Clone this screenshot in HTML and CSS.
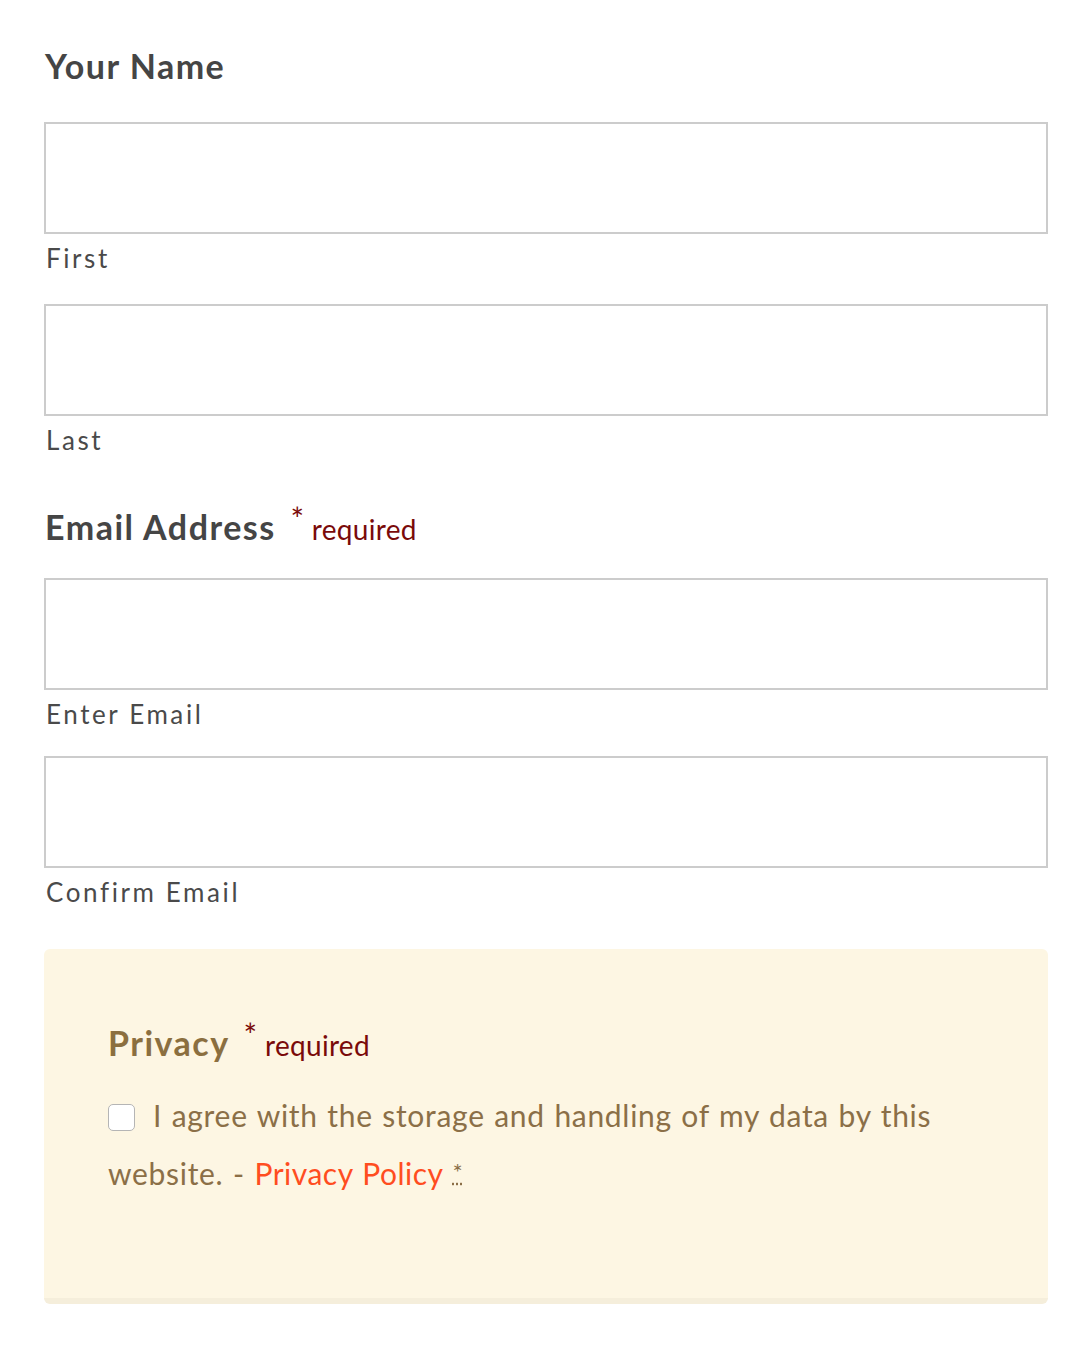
FILE: index.html
```html
<!DOCTYPE html>
<html lang="en">
<head>
<meta charset="utf-8">
<title>Form</title>
<link rel="stylesheet" href="styles.css">
</head>
<body>
<form class="form">
  <div class="group">
    <div class="heading">Your Name</div>
    <div class="field">
      <div class="input"></div>
      <div class="sublabel">First</div>
    </div>
    <div class="field">
      <div class="input"></div>
      <div class="sublabel">Last</div>
    </div>
  </div>
  <div class="group group-email">
    <div class="heading">Email Address <span class="req"><span class="star">*</span> required</span></div>
    <div class="field">
      <div class="input"></div>
      <div class="sublabel">Enter Email</div>
    </div>
    <div class="field field-last">
      <div class="input"></div>
      <div class="sublabel">Confirm Email</div>
    </div>
  </div>
  <div class="privacy">
    <div class="heading privacy-heading">Privacy <span class="req"><span class="star">*</span> required</span></div>
    <div class="consent"><span class="checkbox"></span>I agree with the storage and handling of my data by this website. - <span class="link">Privacy Policy</span><abbr class="mark">*</abbr></div>
  </div>
</form>
</body>
</html>
```
FILE: styles.css
```css
html, body {
  margin: 0;
  padding: 0;
  background: #ffffff;
}
body {
  font-family: Lato, "Liberation Sans", sans-serif;
}
.form {
  padding: 46px 44px 40px 44px;
}
.heading {
  font-size: 34px;
  font-weight: 700;
  color: #454545;
  line-height: 40px;
  letter-spacing: 1.5px;
  margin-bottom: 36px;
  margin-left: 1px;
}
.req {
  font-size: 28px;
  font-weight: 400;
  letter-spacing: 0.3px;
  color: #7a0a0a;
  margin-left: 5px;
}
.star {
  position: relative;
  top: -9px;
  font-size: 32px;
  margin-right: 0;
}
.field {
  margin-bottom: 22px;
}
.input {
  height: 112px;
  box-sizing: border-box;
  border: 2px solid #cccccc;
  background: #fff;
}
.sublabel {
  font-size: 26px;
  line-height: 48px;
  color: #4a4a4a;
  letter-spacing: 2.6px;
  margin-left: 2px;
}
.group-email {
  margin-top: 43px;
}
.group-email .heading {
  margin-bottom: 29px;
}
.group-email .field {
  margin-bottom: 18px;
}
.group-email .field-last {
  margin-bottom: 33px;
}
.privacy {
  background: #fdf6e3;
  border-bottom: 6px solid #f5eedb;
  border-radius: 6px;
  padding: 74px 64px 96px 64px;
}
.privacy-heading {
  color: #8b6f3f;
  margin-bottom: 21px;
  margin-left: 0;
}
.consent {
  font-size: 30px;
  line-height: 58px;
  letter-spacing: 0.7px;
  word-spacing: 1.2px;
  color: #8b6f47;
}
.checkbox {
  display: inline-block;
  width: 27px;
  height: 27px;
  box-sizing: border-box;
  border: 1px solid #b5b5b5;
  border-radius: 5px;
  background: #fff;
  vertical-align: -4px;
  margin-right: 18px;
}
.link {
  color: #ff4d1f;
  letter-spacing: 0.5px;
}
.mark {
  text-decoration: underline dotted;
  font-size: 24px;
  line-height: 1;
  vertical-align: 4px;
  margin-left: 9px;
}
```
